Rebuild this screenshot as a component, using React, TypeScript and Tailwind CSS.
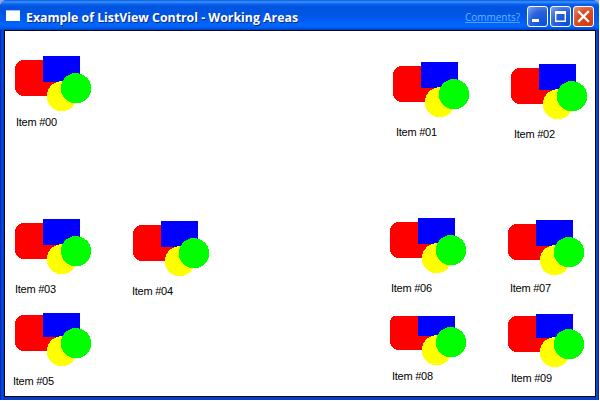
import React from "react";

type Item = { name: string; x: number; y: number; clip: number; lx: number; base: number };

const items: Item[] = [
  { name: "Item #00", x: 15, y: 56, clip: 0, lx: 16, base: 126 },
  { name: "Item #01", x: 393, y: 62, clip: 0, lx: 396, base: 136 },
  { name: "Item #02", x: 511, y: 64, clip: 0, lx: 514, base: 138 },
  { name: "Item #03", x: 15, y: 219, clip: 0, lx: 15, base: 293 },
  { name: "Item #04", x: 133, y: 221, clip: 0, lx: 132, base: 295 },
  { name: "Item #05", x: 15, y: 311, clip: 2, lx: 13, base: 385 },
  { name: "Item #06", x: 390, y: 218, clip: 0, lx: 391, base: 292 },
  { name: "Item #07", x: 508, y: 220, clip: 0, lx: 510, base: 292 },
  { name: "Item #08", x: 390, y: 310, clip: 6, lx: 392, base: 380 },
  { name: "Item #09", x: 508, y: 312, clip: 2, lx: 511, base: 382 },
];

function ShapesIcon({ clip }: { clip: number }) {
  return (
    <svg
      className="block"
      width="77"
      height={56 - clip}
      viewBox={`0 ${clip} 77 ${56 - clip}`}
      shapeRendering="crispEdges"
    >
      <rect x="0" y="4" width="50" height="36" rx="9" fill="#ff0000" />
      <rect x="28" y="0" width="37" height="26" fill="#0000ff" />
      <circle cx="46.8" cy="40.2" r="15" fill="#ffff00" />
      <circle cx="61" cy="32.3" r="15.2" fill="#00ff00" />
    </svg>
  );
}

function ListItem({ item }: { item: Item }) {
  // The list area starts at (5, 31) inside the window.
  return (
    <>
      <div className="absolute" style={{ left: item.x - 5, top: item.y + item.clip - 31 }}>
        <ShapesIcon clip={item.clip} />
      </div>
      <span
        className="absolute whitespace-nowrap text-[11px] leading-[13px] tracking-[-0.25px] text-black"
        style={{ left: item.lx - 5, top: item.base - 41 }}
      >
        {item.name}
      </span>
    </>
  );
}

function CaptionButton({ close, label, children }: { close?: boolean; label: string; children: React.ReactNode }) {
  return (
    <button
      aria-label={label}
      className={
        "flex h-[21px] w-[21px] items-center justify-center rounded-[3px] border border-white " +
        (close
          ? "bg-[radial-gradient(circle_at_75%_85%,#d83b10_0%,#da4a22_55%,#e8947c_100%)]"
          : "bg-[radial-gradient(circle_at_80%_85%,#0b51dc_0%,#2b62dc_55%,#84a5ee_100%)]")
      }
    >
      <svg className="block shrink-0" width="19" height="19" viewBox="0 0 19 19">
        {children}
      </svg>
    </button>
  );
}

export default function App() {
  return (
    <div className="h-[401px] w-[600px] overflow-hidden bg-[linear-gradient(to_bottom,#8fa5e0_8px,#ffffff_8px)] bg-[length:599px_401px] bg-no-repeat font-['Liberation_Sans',Arial,sans-serif]">
      <div className="flex h-[400px] w-[599px] flex-col overflow-hidden rounded-t-[7px] bg-[#0a3fd4]">
        <header className="flex h-[30px] shrink-0 items-center bg-[linear-gradient(to_bottom,#0858dc_0px,#3a94ff_2px,#0b62ef_4px,#0054df_7px,#0055e3_14px,#005cf2_20px,#0066ff_25px,#0062fa_27px,#0040c0_30px)] pl-[6px] pr-[5px] pt-[3px]">
          <div className="mb-[2px] h-[11px] w-[14px] border-t border-[#9dc0ff] bg-white" />
          <h1 className="ml-[6px] w-[280px] whitespace-nowrap font-['Open_Sans','Noto_Sans',sans-serif] text-[12.5px] font-bold leading-4 text-white [text-shadow:1px_1px_#0b2a85]">
            <svg className="block overflow-visible" width="274" height="16">
              <text x="0" y="13" textLength="272" lengthAdjust="spacingAndGlyphs" fill="white">
                Example of ListView Control - Working Areas
              </text>
            </svg>
          </h1>
          <a className="ml-auto mr-[7px] font-['Open_Sans','Noto_Sans',sans-serif] text-[11px] leading-[14px] text-[#5da5ff]">
            <svg className="block overflow-visible" width="55" height="14">
              <text x="0" y="11" textLength="55" lengthAdjust="spacingAndGlyphs" fill="#6fb2ff">
                Comments?
              </text>
              <rect x="0" y="12" width="55" height="1" fill="#4fa0ff" />
            </svg>
          </a>
          <div className="flex gap-[2px]">
            <CaptionButton label="Minimize">
              <rect x="4" y="12" width="7" height="3" fill="white" />
            </CaptionButton>
            <CaptionButton label="Maximize">
              <path d="M4 4h11v11H4zM5.4 7v6.6h8.2V7z" fill="white" fillRule="evenodd" />
            </CaptionButton>
            <CaptionButton label="Close" close>
              <path d="M5 5l9 9M14 5l-9 9" stroke="white" strokeWidth="2.3" strokeLinecap="square" />
            </CaptionButton>
          </div>
        </header>
        <div className="h-[370px] bg-[linear-gradient(to_right,#0022b5_0px,#0a4be0_2px,#063cc8_4px,#063cc8_596px,#1450d8_597px,#001c96_599px)] pb-[3px] pl-[4px] pr-[3px]">
          <main className="relative h-[367px] w-[592px] overflow-hidden border border-[#000418] bg-white">
            {items.map((item) => (
              <ListItem key={item.name} item={item} />
            ))}
          </main>
        </div>
      </div>
    </div>
  );
}
